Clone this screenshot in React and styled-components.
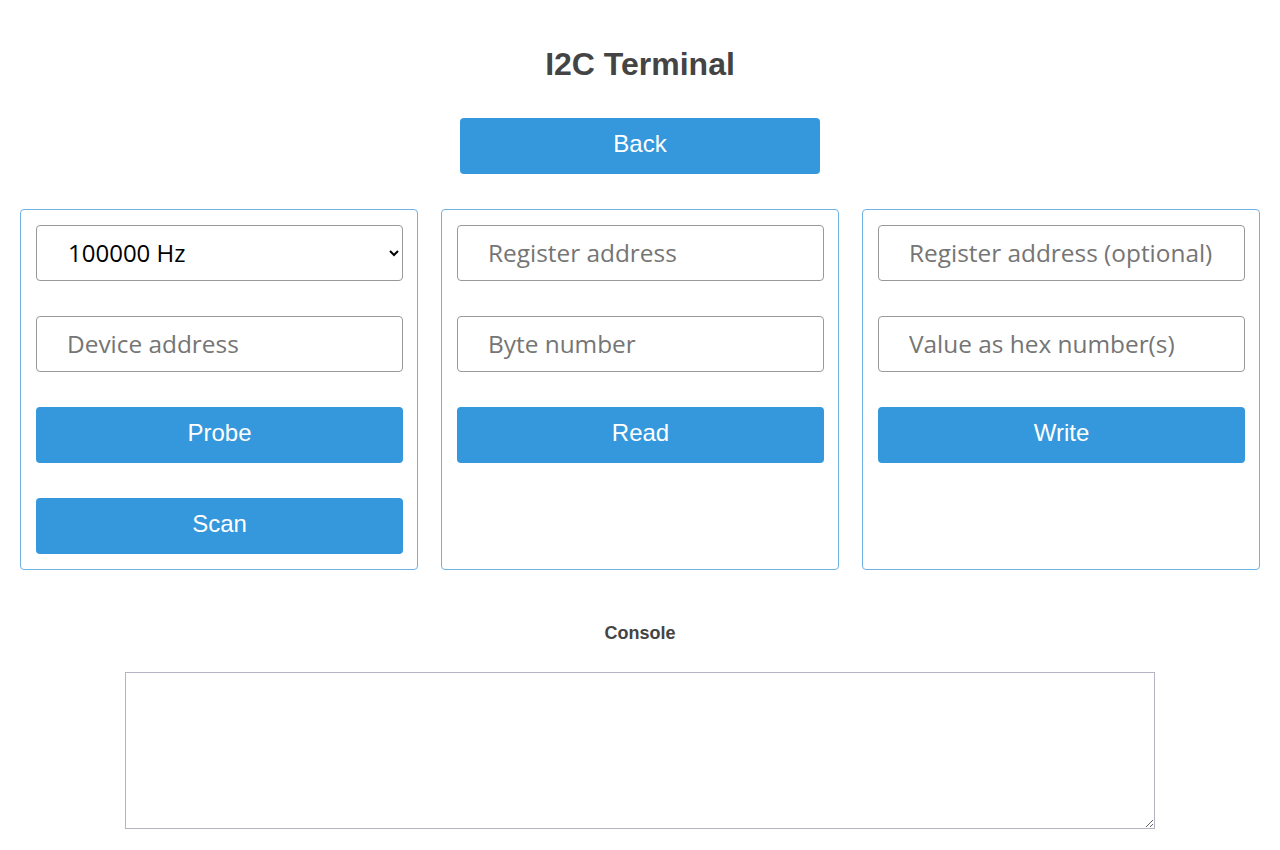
import React from "react";
import styled, { createGlobalStyle } from "styled-components";

const GlobalStyle = createGlobalStyle`
  body {
    margin: 0;
    background: #fff;
    font-family: "Liberation Sans", Arial, sans-serif;
    color: #444;
  }
`;

const Page = styled.div`
  display: flex;
  flex-direction: column;
  align-items: center;
  padding: 46px 20px 0;
`;

const Title = styled.h1`
  margin: 0;
  font-size: 32px;
  line-height: 37px;
  font-weight: bold;
  color: #444;
`;

const Button = styled.button`
  display: block;
  width: ${(p) => p.width || "100%"};
  height: 56px;
  border: none;
  border-radius: 4px;
  background: #3598dc;
  color: #fff;
  font-family: "Liberation Sans", Arial, sans-serif;
  font-size: 24px;
  cursor: pointer;
  padding: 0 0 5px;
`;

const BackButton = styled(Button)`
  margin-top: 35px;
`;

const Panels = styled.div`
  display: grid;
  grid-template-columns: repeat(3, 398px);
  justify-content: space-between;
  width: 100%;
  margin-top: 35px;
`;

const Panel = styled.div`
  border: 1px solid #6fb1e2;
  border-radius: 4px;
  padding: 15px 14px 15px 15px;
  display: flex;
  flex-direction: column;
  gap: 35px;
`;

const Input = styled.input`
  box-sizing: border-box;
  width: 100%;
  height: 56px;
  border: 1px solid #999;
  border-radius: 4px;
  padding: 0 0 2px 30px;
  font-family: "Open Sans", "Noto Sans", sans-serif;
  font-size: 24.4px;
  color: #222;
  background: #fff;
  &::placeholder {
    color: #757575;
  }
`;

const Select = styled.select`
  box-sizing: border-box;
  width: 100%;
  height: 56px;
  border: 1px solid #999;
  border-radius: 4px;
  padding: 0 8px 2px 27px;
  font-family: "Open Sans", "Noto Sans", sans-serif;
  font-size: 24px;
  color: #000;
  background: #fff;
`;

const Label = styled.h3`
  margin: 53px 0 0;
  font-size: 18px;
  font-weight: bold;
  color: #444;
`;

const Console = styled.textarea`
  box-sizing: border-box;
  margin-top: 28px;
  width: 1030px;
  height: 157px;
  border: 1px solid #b3b3c3;
  border-radius: 0;
  resize: vertical;
  font-family: "Liberation Mono", monospace;
  font-size: 14px;
`;

export default function App() {
  return (
    <>
      <GlobalStyle />
      <Page>
        <Title>I2C Terminal</Title>
        <BackButton width="360px">Back</BackButton>
        <Panels>
          <Panel>
            <Select defaultValue="100000">
              <option value="100000">100000 Hz</option>
              <option value="400000">400000 Hz</option>
            </Select>
            <Input placeholder="Device address" />
            <Button>Probe</Button>
            <Button>Scan</Button>
          </Panel>
          <Panel>
            <Input placeholder="Register address" />
            <Input placeholder="Byte number" />
            <Button>Read</Button>
          </Panel>
          <Panel>
            <Input placeholder="Register address (optional)" />
            <Input placeholder="Value as hex number(s)" />
            <Button>Write</Button>
          </Panel>
        </Panels>
        <Label>Console</Label>
        <Console />
      </Page>
    </>
  );
}
